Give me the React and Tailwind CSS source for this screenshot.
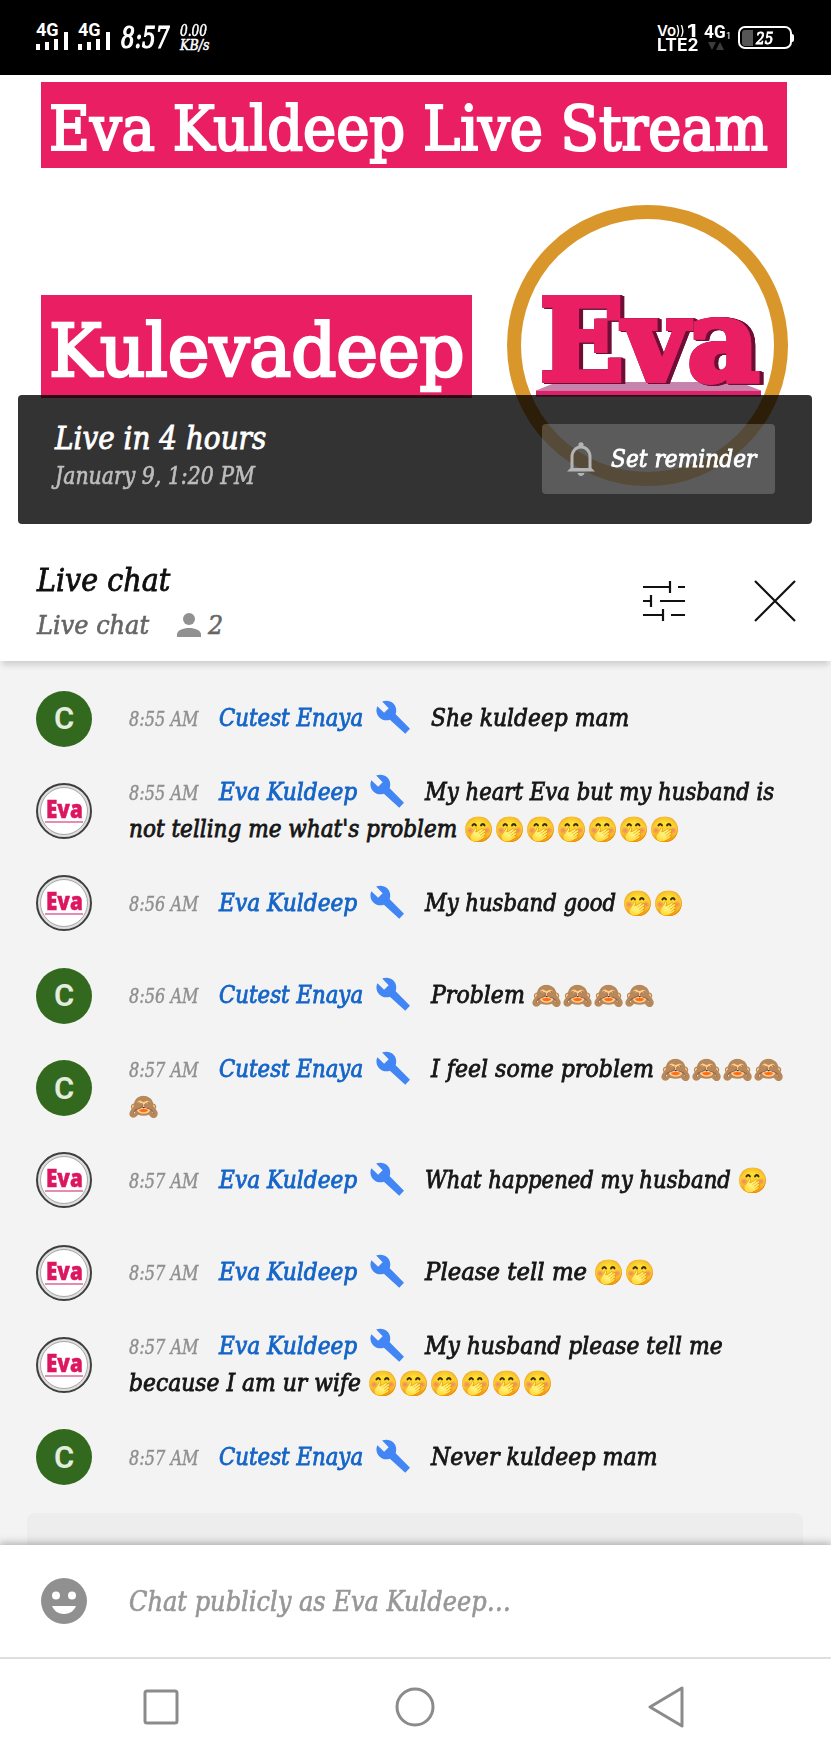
import React, { useLayoutEffect, useRef, useState } from "react";

const SERIF = "font-['DejaVu_Serif_Condensed','DejaVu_Serif',serif]";

/* Text condensed horizontally so that it fills a given width. */
function Fit({ w, box = "", className = "", children }) {
  const ref = useRef(null);
  const [k, setK] = useState(1);
  useLayoutEffect(() => {
    setK(w / ref.current.offsetWidth);
  }, [w]);
  return (
    <span className={`flex shrink-0 whitespace-nowrap ${box}`} style={{ width: w }}>
      <span
        ref={ref}
        className={`block shrink-0 origin-left whitespace-nowrap ${className}`}
        style={{ transform: `scaleX(${k})` }}
      >
        {children}
      </span>
    </span>
  );
}

function Wrench() {
  return (
    <svg viewBox="0 0 24 24" className="-ml-[1.5px] mr-[-1.5px] size-[36.5px] shrink-0 text-[#4285f4]" fill="currentColor">
      <path d="M23 19.6 13.6 10c.8-2.4.4-5.1-1.5-7-2-2-5-2.4-7.4-1.3L9 6 6 9 1.6 4.7C.4 7.1.9 10.1 2.9 12.1c1.9 1.9 4.6 2.4 6.9 1.5l10.1 9.2z" />
    </svg>
  );
}

function EvaAvatar() {
  return (
    <div className="flex size-14 shrink-0 items-center justify-center rounded-full border-2 border-[#3f3f3f] bg-[#dedede] p-[2px]">
      <div className="flex size-full flex-col items-center justify-center rounded-full border border-[#a8a8a8] bg-white">
        <Fit w={37} className="font-['Open_Sans',sans-serif] text-[24px] leading-[20px] font-extrabold text-[#dc1660] [-webkit-text-stroke:0.5px]">Eva</Fit>
        <div className="mt-[2px] h-[2px] w-[38px] bg-[#e58bb4]" />
      </div>
    </div>
  );
}

function CAvatar() {
  return (
    <div className="flex size-14 shrink-0 items-center justify-center rounded-full bg-[#33691e] font-['Roboto',sans-serif] text-[31px] leading-none font-semibold text-[#e4ecdf]">
      <Fit w={20}>C</Fit>
    </div>
  );
}

function Emojis({ char, n }) {
  return (
    <span className="ml-[6px] flex not-italic first:-ml-px">
      {Array.from({ length: n }, (_, i) => (
        <span key={i} className="flex w-[31.1px] shrink-0 justify-start font-['Noto_Color_Emoji',sans-serif] text-[25px] leading-[37px] [-webkit-text-stroke:0px]">
          {char}
        </span>
      ))}
    </span>
  );
}

const MSGS = [
  { who: "c", time: "8:55 AM", text: "She kuldeep mam", w: 198 },
  { who: "e", time: "8:55 AM", text: "My heart Eva but my husband is", w: 349, text2: "not telling me what's problem", w2: 328, e2: ["🤭", 7] },
  { who: "e", time: "8:56 AM", text: "My husband good", w: 191, e1: ["🤭", 2] },
  { who: "c", time: "8:56 AM", text: "Problem", w: 94, e1: ["🙈", 4] },
  { who: "c", time: "8:57 AM", text: "I feel some problem", w: 223, e1: ["🙈", 4], e2: ["🙈", 1] },
  { who: "e", time: "8:57 AM", text: "What happened my husband", w: 306, e1: ["🤭", 1] },
  { who: "e", time: "8:57 AM", text: "Please tell me", w: 162, e1: ["🤭", 2] },
  { who: "e", time: "8:57 AM", text: "My husband please tell me", w: 298, text2: "because I am ur wife", w2: 232, e2: ["🤭", 6] },
  { who: "c", time: "8:57 AM", text: "Never kuldeep mam", w: 227 },
];

function Message({ m }) {
  const c = m.who === "c";
  return (
    <div className="flex h-[92.35px] shrink-0 items-center pl-9">
      {c ? <CAvatar /> : <EvaAvatar />}
      <div className="ml-[37px] text-[24px] leading-[37px] text-[#161616] italic [-webkit-text-stroke:0.8px]">
        <div className="flex h-[37px] items-center">
          <Fit w={70} box="pt-[2px]" className="text-[20px] leading-[35px] text-[#8f8f8f] [-webkit-text-stroke:0.4px]">{m.time}</Fit>
          <Fit w={c ? 144 : 138} box="ml-5" className="text-[#1565c8]">{c ? "Cutest Enaya" : "Eva Kuldeep"}</Fit>
          <span className="mr-[21px] ml-[13px] flex w-[34px] -translate-y-px"><Wrench /></span>
          <Fit w={m.w}>{m.text}</Fit>
          {m.e1 && <Emojis char={m.e1[0]} n={m.e1[1]} />}
        </div>
        {m.e2 && (
          <div className="flex h-[37px] items-center">
            {m.text2 && <Fit w={m.w2}>{m.text2}</Fit>}
            <Emojis char={m.e2[0]} n={m.e2[1]} />
          </div>
        )}
      </div>
    </div>
  );
}

function Signal() {
  return (
    <div className="flex h-[28px] w-[33px] items-end">
      <div className="flex flex-col">
        <Fit w={23} className="font-['Roboto',sans-serif] text-[18px] leading-[14px] font-bold">4G</Fit>
        <div className="mt-[2px] flex h-[11px] items-end gap-[5px]">
          <div className="h-[6px] w-[4px] bg-white" />
          <div className="h-[8px] w-[4px] bg-white" />
          <div className="h-[11px] w-[4px] bg-white" />
        </div>
      </div>
      <div className="ml-[5px] h-[18px] w-[4px] bg-white" />
    </div>
  );
}

function StatusBar() {
  return (
    <div className="flex h-[75px] items-start justify-between bg-black pt-[22px] pr-[37px] pl-9 text-white">
      <div className="flex items-start">
        <Signal />
        <div className="w-[9px]" />
        <Signal />
        <Fit w={49} box="ml-[10px]" className="mt-px text-[29px] leading-[30px] italic [-webkit-text-stroke:1.2px]">8:57</Fit>
        <div className="ml-[10px] flex flex-col pt-px italic [-webkit-text-stroke:0.5px]">
          <Fit w={27} className="text-[16px] leading-[15px]">0.00</Fit>
          <Fit w={29} className="text-[14px] leading-[14px]">KB/s</Fit>
        </div>
      </div>
      <div className="flex items-start">
        <div className="flex flex-col pt-[1px] font-['Inter',sans-serif]">
          <div className="flex h-[15px] items-center">
            <Fit w={19} className="text-[15px] leading-[15px] font-semibold">Vo</Fit>
            <Fit w={9} className="text-[13px] leading-[13px] font-medium">))</Fit>
            <Fit w={10} box="ml-[2px]" className="text-[18px] leading-[15px] font-bold">1</Fit>
          </div>
          <Fit w={41} className="text-[17px] leading-[15px] font-bold">LTE2</Fit>
        </div>
        <div className="mt-[2px] ml-[6px] flex flex-col">
          <div className="flex items-end">
            <Fit w={22} className="font-['Roboto',sans-serif] text-[18px] leading-[16px] font-bold">4G</Fit>
            <span className="w-[4px] font-['Roboto',sans-serif] text-[9px] leading-[8px]">1</span>
          </div>
          <svg viewBox="0 0 16 8" className="mt-[2px] ml-[4px] h-[8px] w-[16px]" fill="#3c3c3c">
            <path d="M0 0h8L4 8zM8 8h8l-4-8z" />
          </svg>
        </div>
        <div className="mt-[4px] ml-[8px] flex items-center">
          <div className="flex h-[23px] w-[54px] items-center rounded-[7px] border-2 border-white pl-[2px]">
            <div className="h-[16px] w-[11px] rounded-l-[3px] bg-[#565656]" />
            <Fit w={17} box="ml-[3px]" className="text-[17px] leading-[18px] italic [-webkit-text-stroke:0.9px]">25</Fit>
          </div>
          <div className="h-[8px] w-[2px] rounded-r bg-white" />
        </div>
      </div>
    </div>
  );
}

function EvaLogo() {
  return (
    <svg viewBox="0 0 281 281" className="absolute top-[130px] left-[506.5px] size-[281px]">
      <circle cx="140.5" cy="140.5" r="133.5" fill="#fff" stroke="#d9972b" strokeWidth="14" />
      <path d="M50 177h182l22 8.500H29z" fill="#c684ad" />
      <path d="M29 185.500h225v6H29z" fill="#d8226a" />
      <text
        x="33"
        y="175"
        textLength="219"
        lengthAdjust="spacingAndGlyphs"
        fontFamily="DejaVu Serif"
        fontWeight="bold"
        fontSize="112"
        fill="#ea1e63"
        stroke="#ea1e63"
        strokeWidth="6"
        className="[filter:drop-shadow(0_0_0.5px_#7a3050)_drop-shadow(2px_0_0_#6f0d36)_drop-shadow(2px_1px_0_#6f0d36)]"
      >
        Eva
      </text>
    </svg>
  );
}

function Hero() {
  return (
    <div className="relative h-[469px] bg-white pt-[7px]">
      <div className="ml-[41px] h-[85.500px] w-[746px] bg-[#ea1e63] pl-[8px] text-white">
        <Fit w={719} className="text-[62px] leading-[93px] [-webkit-text-stroke:2.2px]">Eva Kuldeep Live Stream</Fit>
      </div>
      <div className="mt-[127.500px] ml-[41px] h-[103px] w-[431px] bg-[#ea1e63] pl-[8px] text-white">
        <Fit w={416} className="text-[73px] leading-[111px] [-webkit-text-stroke:2.600px]">Kulevadeep</Fit>
      </div>
      <EvaLogo />
      <div className="absolute top-[319.500px] left-[18px] flex h-[129px] w-[794px] items-start justify-between rounded-[4px] bg-black/80 pt-[26px] pr-[37px] pl-[37px] italic">
        <div className="flex flex-col">
          <Fit w={211} className="text-[31px] leading-[34px] text-white [-webkit-text-stroke:0.8px]">Live in 4 hours</Fit>
          <Fit w={200} className="mt-[4px] text-[24px] leading-[34px] text-[#bdbdbd] [-webkit-text-stroke:0.600px]">January 9, 1:20 PM</Fit>
        </div>
        <div className="mt-[3px] flex h-[70.500px] w-[233px] items-center rounded-[4px] bg-white/20 pl-[25px]">
          <svg viewBox="0 0 28 34" className="h-[34px] w-[28px]" fill="none">
            <path d="M5 28V15C5 9 9 5 14 5s9 4 9 10v13" stroke="#b4b4b4" strokeWidth="3" />
            <path d="M0 29.500 3.500 26h21l3.500 3.500zM10.500 31h7c-.5 2-1.800 3-3.500 3s-3-1-3.500-3z" fill="#b4b4b4" />
            <circle cx="14" cy="2.800" r="2.600" fill="#b4b4b4" />
          </svg>
          <Fit w={145} box="ml-[16px]" className="text-[24px] leading-[34px] text-white [-webkit-text-stroke:0.8px]">Set reminder</Fit>
        </div>
      </div>
    </div>
  );
}

function ChatHeader() {
  return (
    <div className="relative z-10 flex h-[117px] shrink-0 items-start justify-between bg-white pr-[35px] pl-[37px] shadow-[0_6px_6px_-2px_rgba(0,0,0,0.15)]">
      <div className="flex flex-col pt-[14px] italic">
        <Fit w={133} className="text-[32px] leading-[44px] text-[#0f0f0f] [-webkit-text-stroke:0.8px]">Live chat</Fit>
        <div className="flex items-center text-[#666]">
          <Fit w={112} className="text-[26.5px] leading-[46px] [-webkit-text-stroke:0.600px]">Live chat</Fit>
          <svg viewBox="0 0 24 24" className="-mt-[1px] ml-[28px] size-[24px]" fill="#919191">
            <circle cx="12" cy="6" r="6" />
            <path d="M0 24v-2.500C0 17.300 6 15 12 15s12 2.300 12 6.500V24z" />
          </svg>
          <Fit w={15} box="ml-[7px]" className="text-[26.5px] leading-[46px] [-webkit-text-stroke:0.600px]">2</Fit>
        </div>
      </div>
      <div className="flex items-center pt-[36px]">
        <svg viewBox="0 0 42 40" className="h-[40px] w-[42px]" fill="none" stroke="#111" strokeWidth="2.200">
          <path d="M0 6h27M27 0v12M35 6h7M0 20h8M8 14v12M17 20h25M0 34h20M20 28v12M28 34h14" />
        </svg>
        <svg viewBox="0 0 42 42" className="ml-[69px] h-[42px] w-[42px]" fill="none" stroke="#111" strokeWidth="2.200">
          <path d="m1 1 40 40M41 1 1 41" />
        </svg>
      </div>
    </div>
  );
}

export default function App() {
  return (
    <div className={`flex h-[1755px] w-[831px] flex-col overflow-hidden bg-white ${SERIF}`}>
      <StatusBar />
      <Hero />
      <ChatHeader />
      <div className="flex h-[884px] shrink-0 flex-col overflow-hidden bg-[#f3f3f3] pt-[11.5px]">
        {MSGS.map((m, i) => (
          <Message key={i} m={m} />
        ))}
        <div className="mt-[9px] ml-[27px] h-[60px] w-[776px] shrink-0 rounded-lg bg-[#ededed]" />
      </div>
      <div className="relative flex h-[112px] shrink-0 items-center bg-white pl-[41px] shadow-[0_-1px_8px_1px_rgba(0,0,0,0.28)]">
        <svg viewBox="0 0 46 46" className="size-[46px]">
          <circle cx="23" cy="23" r="23" fill="#909090" />
          <circle cx="15" cy="17.500" r="4" fill="#fff" />
          <circle cx="31" cy="17.500" r="4" fill="#fff" />
          <path d="M11 28h24c-2 5-6.500 8-12 8s-10-3-12-8z" fill="#fff" />
        </svg>
        <Fit w={382} box="ml-[42px]" className="text-[27.5px] leading-[44px] text-[#979797] italic [-webkit-text-stroke:0.600px]">Chat publicly as Eva Kuldeep…</Fit>
      </div>
      <div className="relative flex h-[98px] shrink-0 items-center border-t-2 border-[#dfdfdf] bg-white pl-[143px]">
        <svg viewBox="0 0 36 36" className="size-[36px]" fill="none" stroke="#8b8b8b" strokeWidth="3">
          <rect x="2" y="2" width="32" height="32" rx="2" />
        </svg>
        <svg viewBox="0 0 40 40" className="ml-[216px] size-[40px]" fill="none" stroke="#8b8b8b" strokeWidth="3">
          <circle cx="20" cy="20" r="18" />
        </svg>
        <svg viewBox="0 0 36 42" className="ml-[213px] h-[42px] w-[36px]" fill="none" stroke="#8b8b8b" strokeWidth="3" strokeLinejoin="round">
          <path d="M2 21 34 2v38z" />
        </svg>
      </div>
    </div>
  );
}
